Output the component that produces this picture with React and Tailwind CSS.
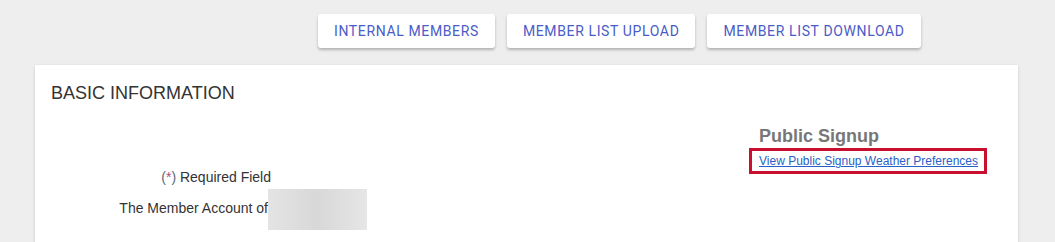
import React from "react";

export default function App() {
  const btn =
    "h-[34px] px-4 bg-white rounded-[3px] shadow-[0_2px_3px_rgba(0,0,0,0.25)] text-[14px] text-[#4a5cc7] font-['Roboto',sans-serif] font-normal tracking-[0.045em] flex items-center";
  return (
    <div className="min-h-screen h-[242px] overflow-hidden bg-[#eeeeee] font-['Liberation_Sans',Arial,sans-serif]">
      <div className="flex gap-3 pl-[318px] pt-[14px]">
        <button className={btn}>INTERNAL MEMBERS</button>
        <button className={btn}>MEMBER LIST UPLOAD</button>
        <button className={btn}>MEMBER LIST DOWNLOAD</button>
      </div>
      <div className="ml-[35px] mt-[17px] w-[983px] h-[200px] bg-white shadow-[0_1px_3px_rgba(0,0,0,0.15)] px-4 pt-[18px]">
        <h2 className="text-[18px] leading-[21px] text-[#333]">BASIC INFORMATION</h2>
        <div className="flex items-start">
          <div className="w-[708px] pt-[65px] text-[14px] leading-[16px] text-[#333]">
            <div className="w-[220px] text-right">
              <span className="text-[#5a6a7a]">(<span className="text-[#b04a7a]">*</span>)</span> Required Field
            </div>
            <div className="flex items-start mt-[4px]">
              <div className="w-[217px] text-right pt-[11px]">The Member Account of</div>
              <div className="w-[99px] h-[41px] bg-gradient-to-r from-[#e4e4e4] via-[#d8d8d8] to-[#e6e6e6]" />
            </div>
          </div>
          <div className="pt-[22px] -ml-[10px]">
            <div className="pl-[10px] text-[18px] leading-[21px] font-bold text-[#777]">Public Signup</div>
            <div className="mt-[1px] inline-block border-[3px] border-[#c8102e] pl-[7px] pr-[6px] py-[3px]">
              <a href="#" className="text-[12px] leading-[14px] text-[#2a5fc8] underline block">
                View Public Signup Weather Preferences
              </a>
            </div>
          </div>
        </div>
      </div>
    </div>
  );
}
